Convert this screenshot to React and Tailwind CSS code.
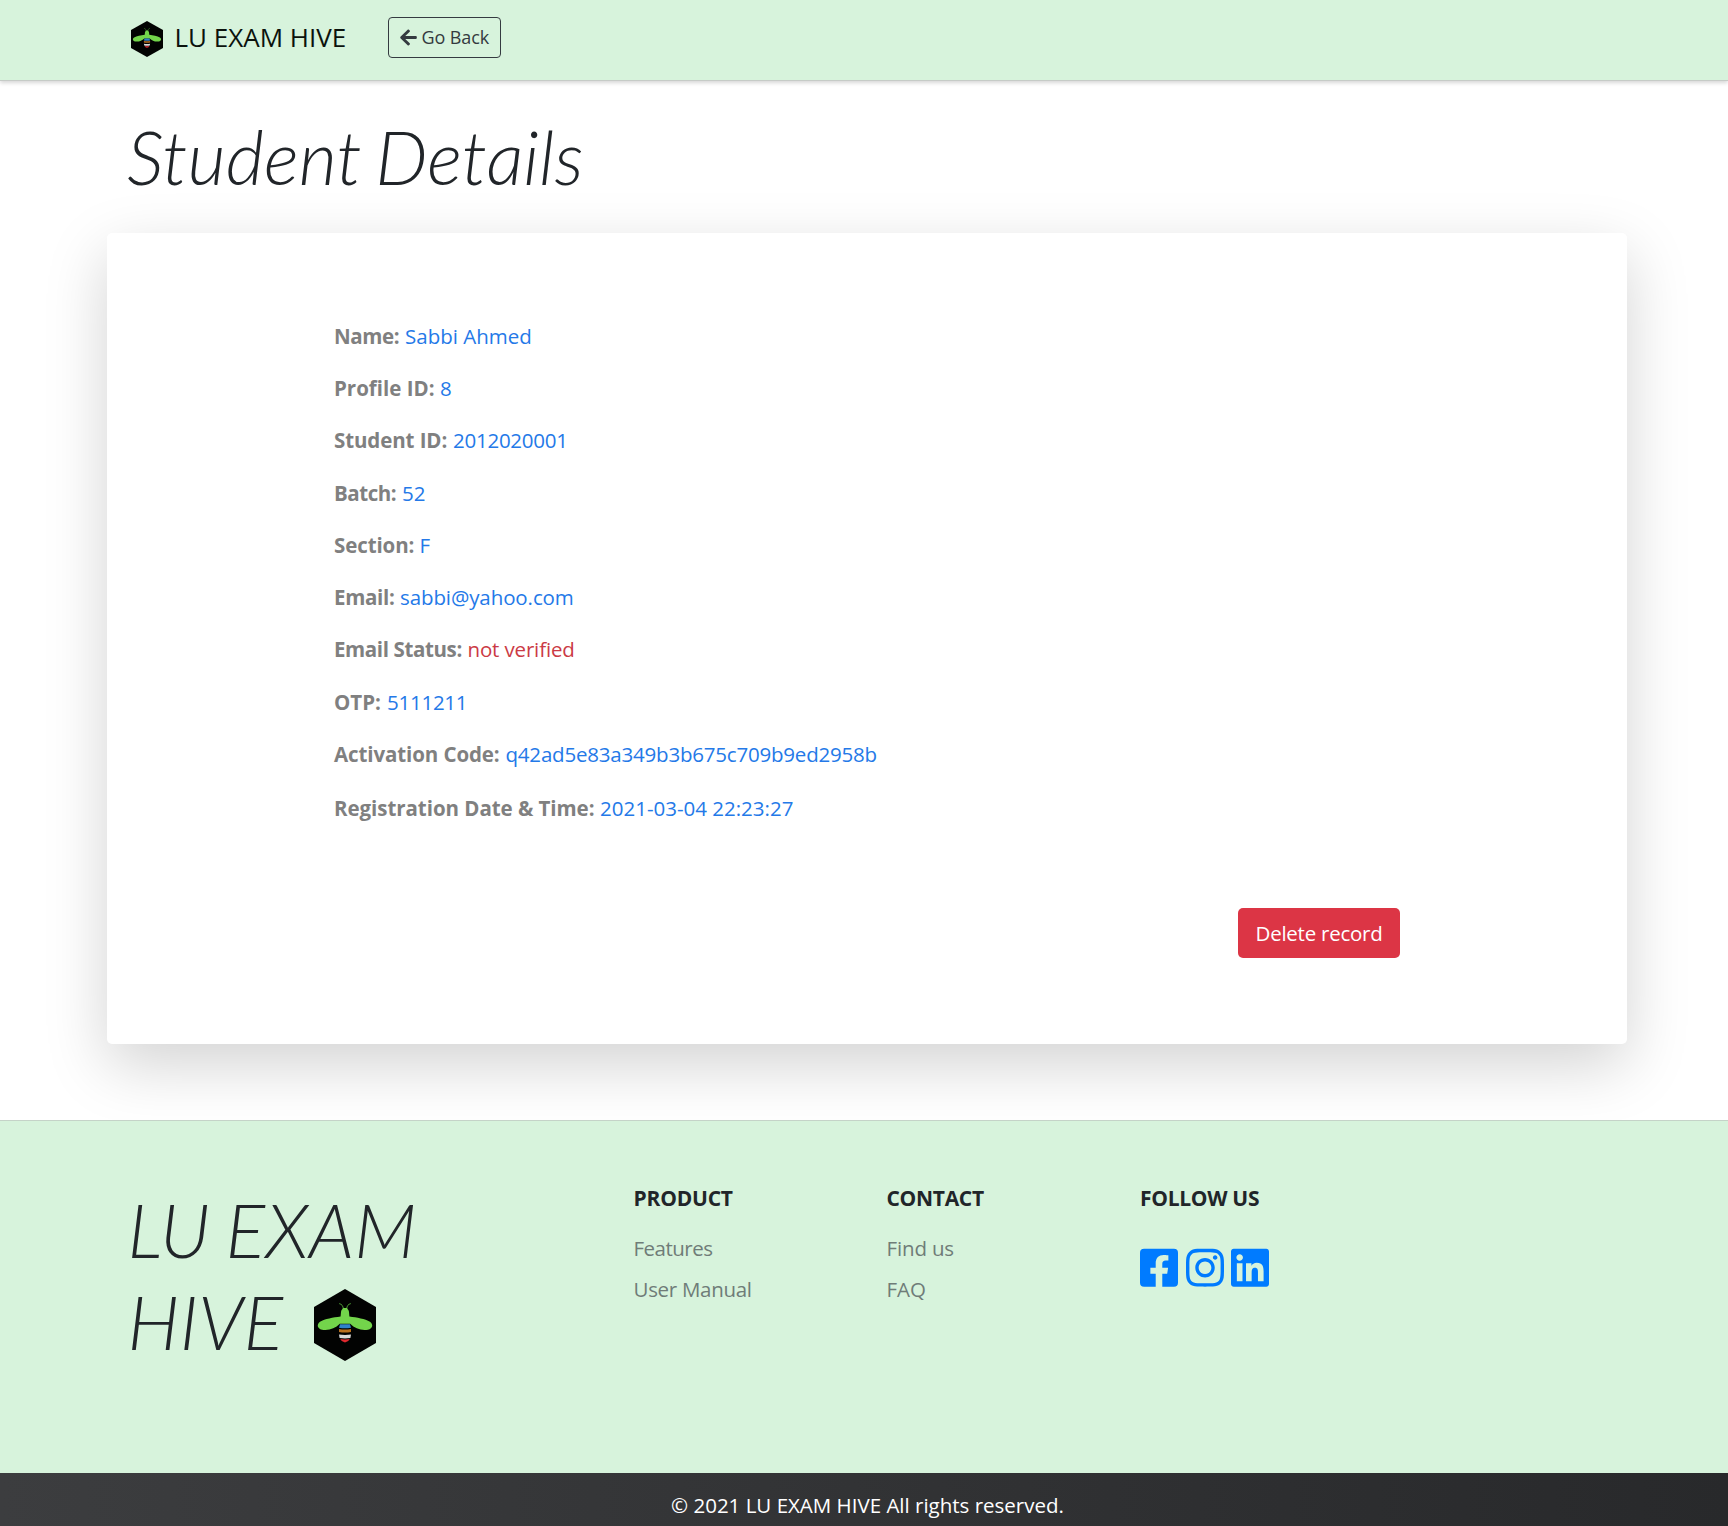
import React from "react";
import { FaArrowLeft, FaFacebookSquare, FaInstagram, FaLinkedin } from "react-icons/fa";

const rows = [
  { label: "Name:", value: "Sabbi Ahmed", w: "w-[71px] tracking-[-0.4px]" },
  { label: "Profile ID:", value: "8", w: "w-[106px]" },
  { label: "Student ID:", value: "2012020001", w: "w-[119px] tracking-[-0.1px]", v: "tracking-[-0.25px]" },
  { label: "Batch:", value: "52", w: "w-[68px] tracking-[-0.45px]" },
  { label: "Section:", value: "F", w: "w-[85.5px] tracking-[-0.1px]" },
  { label: "Email:", value: "sabbi@yahoo.com", w: "w-[66px] tracking-[-0.3px]", v: "tracking-[-0.1px]" },
  { label: "Email Status:", value: "not verified", w: "w-[133.5px] tracking-[-0.38px]", v: "text-[#cb3a45] tracking-[-0.15px]" },
  { label: "OTP:", value: "5111211", w: "w-[53px]", v: "tracking-[-0.25px]" },
  { label: "Activation Code:", value: "q42ad5e83a349b3b675c709b9ed2958b", w: "w-[171.5px] tracking-[-0.1px]", v: "tracking-[-0.2px]" },
  { label: "Registration Date & Time:", value: "2021-03-04 22:23:27", w: "w-[266px] tracking-[-0.05px]" },
];

function Bee({ className }) {
  return (
    <svg viewBox="0 0 62 72" className={className} preserveAspectRatio="none">
      <polygon points="31,0 62,18 62,54 31,72 0,54 0,18" fill="#020302" />
      <g fill="none" stroke="#4c9a35" strokeWidth="1">
        <path d="M29.4 20 C29 17 28 15.2 25.2 14.6" />
        <path d="M32.6 20 C33 17 34 15.2 36.8 14.6" />
      </g>
      <path
        fill="#73d54b"
        d="M27 23 C27 21 28.5 20.6 29 19 L33 19 C33.5 20.6 35 21 35 23 L35.4 27.5 C43 28.6 51 29.8 56 32.8 C59.5 35.5 59 39.5 54 40.8 C47 42 41 39.5 36.2 34.8 L25.8 34.8 C21 39.5 15 42 8 40.8 C3 39.5 2.5 35.5 6 32.8 C11 29.8 19 28.6 26.6 27.5 Z"
      />
      <path d="M26 35.2 H36 L37 38.8 Q31 39.8 25 38.8 Z" fill="#2f83c8" />
      <path d="M25 40 Q31 41 37 40 V43 Q31 44 25 43 Z" fill="#b9701e" />
      <path d="M25 45.5 Q31 46.3 37 45.5 L36.4 49 Q31 49.8 25.6 49 Z" fill="#d9d9d9" />
      <path d="M26.2 50 Q31 50.9 35.8 50 Q34.5 53 31 53.4 Q27.5 53 26.2 50 Z" fill="#e0282e" />
    </svg>
  );
}

export default function App() {
  return (
    <div className="flex h-[1526px] w-[1728px] flex-col overflow-hidden bg-white font-['Open_Sans',sans-serif] text-[20.5px] leading-none text-[#212529]">
      <header className="relative z-10 flex h-[81px] shrink-0 items-start border-b border-[#c6cbc7] bg-[#d7f3dc] pl-[131px] shadow-[0_2px_4px_rgba(0,0,0,0.16)]">
        <Bee className="mt-[21px] h-[36px] w-8" />
        <span className="mt-[17px] ml-[11.5px] w-[213px] text-[26px] leading-[40px] text-[#0b120d]">LU EXAM HIVE</span>
        <button className="mt-[17px] flex h-[41px] w-[113px] items-center rounded border border-[#343a40] pb-px pl-[11px] text-[18px] whitespace-nowrap text-[#343a40]">
          <FaArrowLeft className="h-[19px] w-[17px]" />
          <span className="ml-[5px] tracking-[-0.1px]">Go Back</span>
        </button>
      </header>

      <main className="h-[1039px] shrink-0 pl-[107px]">
        <h1 className="mt-[32px] h-[120px] pl-[20px] font-['Lato'] text-[74px] leading-[88px] font-light italic [word-spacing:-5px]">Student Details</h1>
        <section className="flex h-[811px] w-[1520px] flex-col rounded-[5px] bg-white pt-[77px] pl-[227px] shadow-[0_21px_63px_rgba(0,0,0,0.175)]">
          {rows.map((r) => (
            <div key={r.label} className="flex h-[52.25px] items-center whitespace-nowrap last-of-type:h-[55px]">
              <span className={"font-bold text-[#808080] " + r.w}>{r.label}</span>
              <span className={r.v && r.v.startsWith("text") ? r.v : "text-[#2479e8] " + (r.v || "")}>{r.value}</span>
            </div>
          ))}
          <button className="mt-[73px] ml-[904px] flex h-[50px] w-[162px] items-center justify-center rounded-[5px] bg-[#dc3545] tracking-[-0.25px] text-white">
            Delete record
          </button>
        </section>
      </main>

      <footer className="relative flex h-[353px] shrink-0 items-start border-t border-[#c5d3c8] bg-[#d7f3dc] pl-[127.5px]">
        <div className="mt-[63px] w-[506px] font-['Lato'] text-[74px] leading-[92px] font-light tracking-[0.3px] italic [word-spacing:-4px]">
          <div>LU EXAM</div>
          <div className="flex items-start">
            <span className="w-[186.5px]">HIVE</span>
            <Bee className="mt-[13px] h-[72px] w-[62px]" />
          </div>
        </div>
        <div className="w-[253px] text-[#6f7c78]">
          <h5 className="mt-[61px] text-[21px] leading-8 font-bold tracking-[-0.2px] text-[#212529]">PRODUCT</h5>
          <div className="mt-[14px] leading-[41px] tracking-[-0.5px]">Features</div>
          <div className="leading-[41px] tracking-[-0.3px]">User Manual</div>
        </div>
        <div className="w-[253px] text-[#6f7c78]">
          <h5 className="mt-[61px] text-[21px] leading-8 font-bold tracking-[-0.3px] text-[#212529]">CONTACT</h5>
          <div className="mt-[14px] leading-[41px] tracking-[-0.15px]">Find us</div>
          <div className="leading-[41px]">FAQ</div>
        </div>
        <div className="pl-[0.5px]">
          <h5 className="mt-[61px] text-[21px] leading-8 font-bold tracking-[-0.3px] text-[#212529]">FOLLOW US</h5>
          <div className="mt-[32px] flex gap-[7.5px] text-[#007bff]">
            <FaFacebookSquare className="h-[43.5px] w-[38px]" />
            <FaInstagram className="h-[43.5px] w-[38px]" />
            <FaLinkedin className="h-[43.5px] w-[38px]" />
          </div>
        </div>
      </footer>
      <div className="flex h-[53px] shrink-0 items-start justify-center bg-linear-to-r from-[#3c3d3f] to-[#28292b] pt-[16px] pl-[7px] leading-8 text-white">
        © 2021 LU EXAM HIVE All rights reserved.
      </div>
    </div>
  );
}
